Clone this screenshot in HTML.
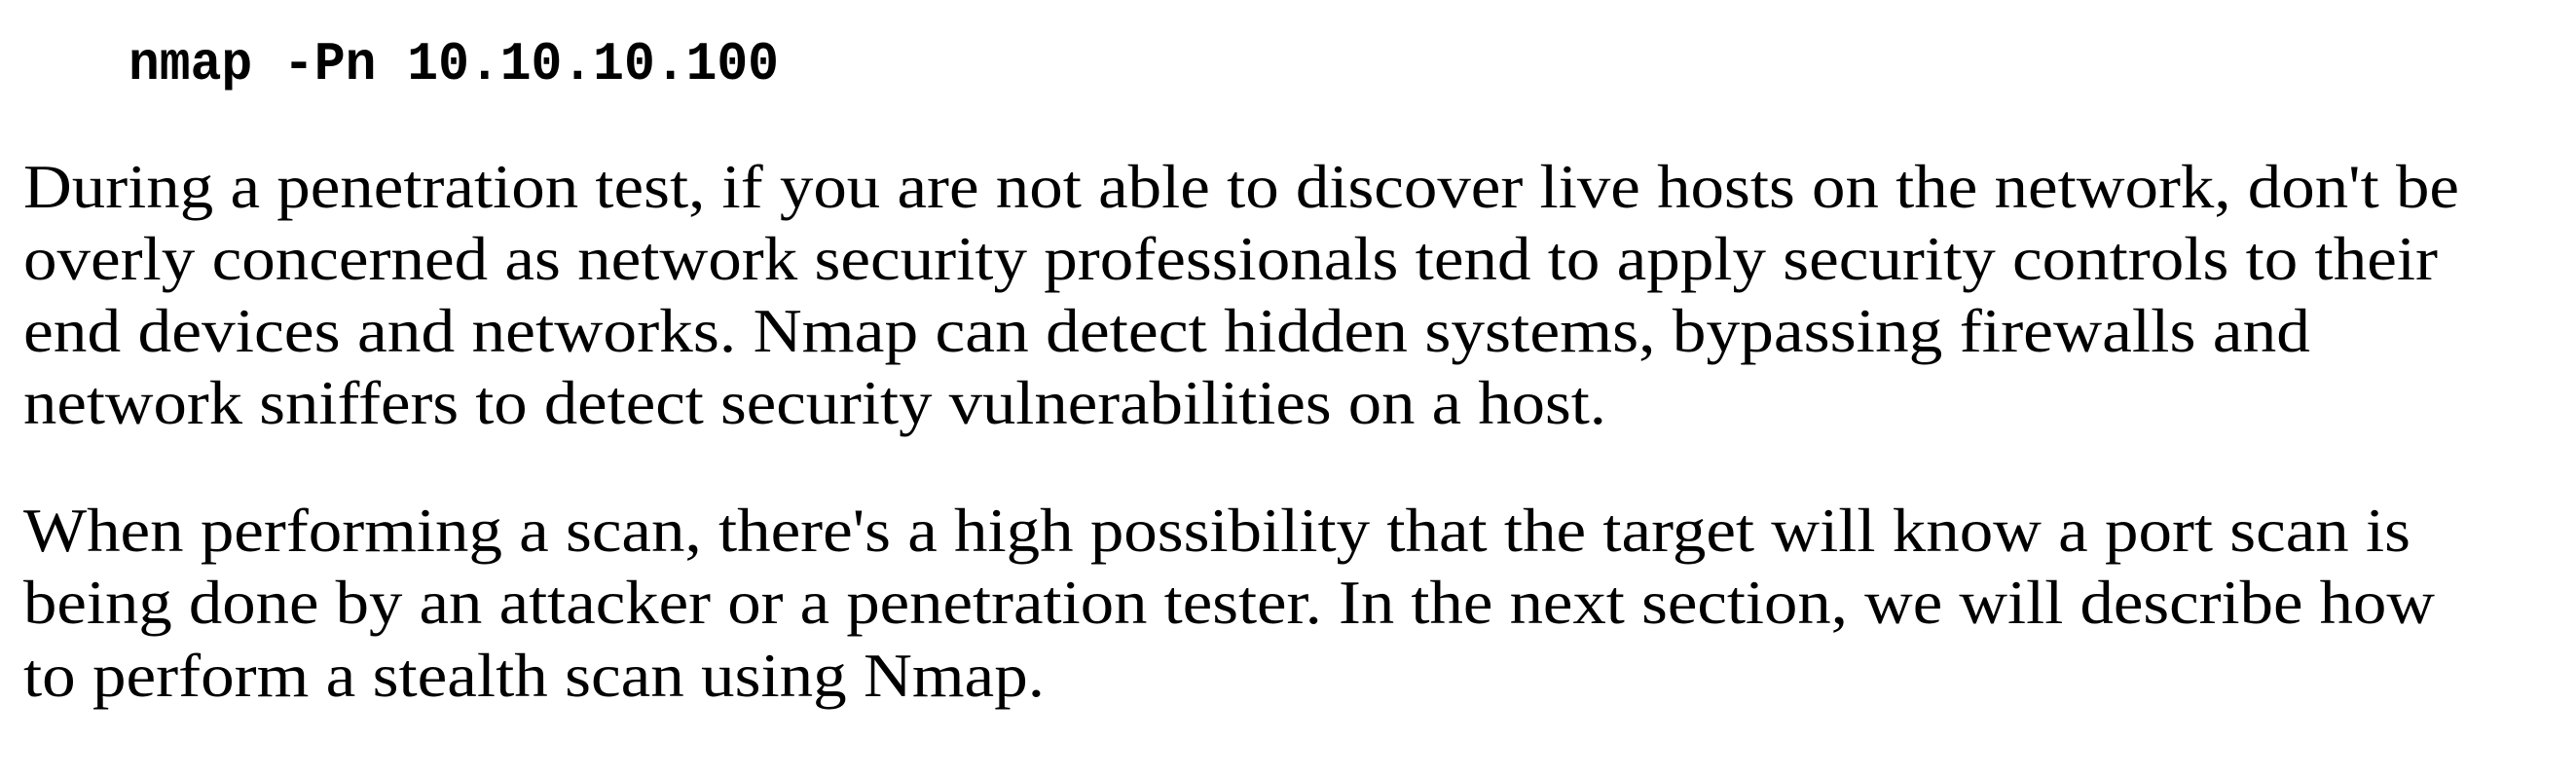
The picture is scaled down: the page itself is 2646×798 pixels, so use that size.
<!DOCTYPE html>
<html><head><meta charset="utf-8"><style>
html,body{margin:0;padding:0;background:#fff;width:2646px;height:798px;overflow:hidden}
svg{display:block}
.b{font-family:"Liberation Serif",serif;font-size:63px;fill:#000}
.c{font-family:"Liberation Mono",monospace;font-weight:bold;font-size:56px;fill:#000}
</style></head><body>
<svg width="2646" height="798" xmlns="http://www.w3.org/2000/svg">
<text class="c" x="132" y="81" textLength="668" lengthAdjust="spacingAndGlyphs">nmap -Pn 10.10.10.100</text>
<text class="b" x="24" y="213" textLength="2502" lengthAdjust="spacingAndGlyphs">During a penetration test, if you are not able to discover live hosts on the network, don't be</text>
<text class="b" x="24" y="287" textLength="2480" lengthAdjust="spacingAndGlyphs">overly concerned as network security professionals tend to apply security controls to their</text>
<text class="b" x="24" y="361" textLength="2349" lengthAdjust="spacingAndGlyphs">end devices and networks. Nmap can detect hidden systems, bypassing firewalls and</text>
<text class="b" x="24" y="435" textLength="1626" lengthAdjust="spacingAndGlyphs">network sniffers to detect security vulnerabilities on a host.</text>
<text class="b" x="24" y="566" textLength="2452" lengthAdjust="spacingAndGlyphs">When performing a scan, there's a high possibility that the target will know a port scan is</text>
<text class="b" x="24" y="640" textLength="2477" lengthAdjust="spacingAndGlyphs">being done by an attacker or a penetration tester. In the next section, we will describe how</text>
<text class="b" x="24" y="715" textLength="1049" lengthAdjust="spacingAndGlyphs">to perform a stealth scan using Nmap.</text>
</svg>
</body></html>
